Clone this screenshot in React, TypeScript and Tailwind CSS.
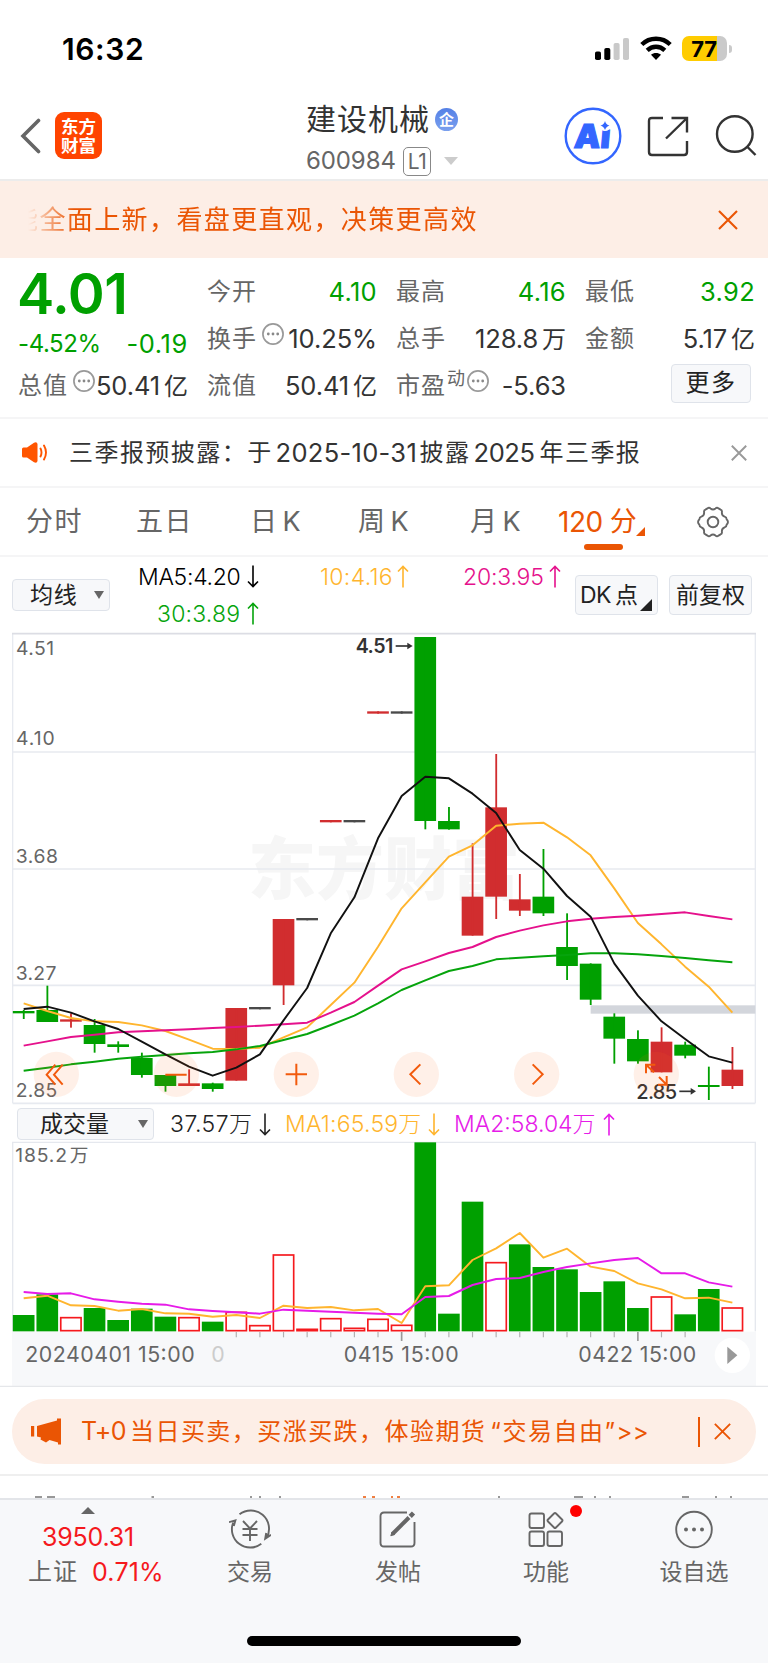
import type { ReactNode } from 'react';

const GREEN = '#00a000';
const RED = '#d12d2f';
const FLAT = '#4a4a4a';

// Horizontal position of the n-th bar, in 3x points
const barX = (i: number) => 71 + i * 70.87;

// [color, open/close top, open/close bottom, high, low]
const candles: [string, number, number, number, number][] = [
  [GREEN, 1143, 1150, 1140, 1167],
  [GREEN, 1140, 1176, 1067, 1176],
  [RED, 1168, 1175, 1150, 1193],
  [GREEN, 1185, 1242, 1167, 1268],
  [GREEN, 1243, 1251, 1234, 1268],
  [GREEN, 1284, 1335, 1268, 1343],
  [GREEN, 1335, 1368, 1335, 1385],
  [RED, 1360, 1368, 1318, 1368],
  [GREEN, 1360, 1377, 1358, 1385],
  [RED, 1134, 1352, 1134, 1352],
  [FLAT, 1131, 1138, 1131, 1138],
  [RED, 867, 1066, 867, 1125],
  [FLAT, 864, 871, 864, 871],
  [RED, 570, 577, 570, 577],
  [FLAT, 570, 577, 570, 577],
  [RED, 244, 251, 244, 251],
  [FLAT, 244, 251, 244, 251],
  [GREEN, 21, 573, 21, 598],
  [GREEN, 573, 598, 531, 599],
  [RED, 800, 917, 640, 917],
  [RED, 532, 800, 372, 867],
  [RED, 808, 842, 732, 858],
  [GREEN, 800, 850, 657, 858],
  [GREEN, 951, 1008, 850, 1050],
  [GREEN, 1001, 1109, 1000, 1125],
  [GREEN, 1160, 1226, 1150, 1301],
  [GREEN, 1227, 1294, 1201, 1301],
  [RED, 1235, 1327, 1192, 1327],
  [GREEN, 1244, 1277, 1235, 1285],
  [GREEN, 1365, 1371, 1310, 1410],
  [RED, 1319, 1368, 1251, 1377],
];

const priceLines = [
  { color: '#ffb52e', data: [1120, 1143, 1164, 1174, 1176, 1186, 1203, 1229, 1256, 1257, 1253, 1222, 1192, 1125, 1058, 950, 835, 757, 680, 646, 587, 581, 578, 622, 676, 775, 879, 943, 1010, 1070, 1148] },
  { color: '#e5118c', data: [1247, 1234, 1221, 1214, 1207, 1204, 1201, 1198, 1194, 1191, 1187, 1183, 1178, 1148, 1116, 1067, 1018, 994, 969, 951, 921, 902, 886, 874, 866, 861, 857, 852, 847, 858, 868] },
  { color: '#06a40c', data: [1322, 1313, 1303, 1295, 1286, 1280, 1275, 1270, 1266, 1258, 1248, 1230, 1212, 1185, 1157, 1120, 1080, 1051, 1023, 1008, 988, 983, 979, 975, 970, 970, 973, 978, 984, 991, 997] },
  { color: '#111111', data: [1137, 1130, 1148, 1174, 1197, 1235, 1273, 1310, 1337, 1313, 1273, 1171, 1074, 910, 802, 625, 498, 440, 445, 491, 549, 660, 716, 798, 860, 1000, 1097, 1174, 1227, 1279, 1298] },
];

// [rising, top]
const volumes: [boolean, number][] = [
  [false, 645], [false, 583], [true, 651], [false, 624], [false, 660], [false, 626], [false, 650], [true, 651],
  [false, 665], [true, 635], [true, 675], [true, 463], [true, 686], [true, 654], [true, 683], [true, 656],
  [true, 674], [false, 127], [false, 641], [false, 305], [true, 486], [false, 433], [false, 501], [false, 508],
  [false, 576], [false, 544], [false, 624], [true, 589], [false, 643], [false, 567], [true, 622],
];

const volumeLines = [
  { color: '#ffb52e', data: [595, 587, 616, 618, 632, 627, 640, 641, 650, 645, 654, 617, 624, 621, 631, 627, 669, 559, 556, 480, 445, 399, 473, 446, 500, 513, 550, 568, 595, 593, 608] },
  { color: '#e61be8', data: [576, 582, 580, 598, 605, 611, 614, 628, 633, 637, 641, 629, 632, 635, 638, 641, 643, 591, 588, 555, 537, 534, 516, 501, 490, 480, 474, 520, 520, 547, 560] },
];

const toPoints = (data: number[]) => data.map((y, i) => `${barX(i)},${y}`).join(' ');

const Cross = ({ size, className, width = 2 }: { size: number; className: string; width?: number }) => (
  <svg width={size} height={size} viewBox="0 0 20 20" className={className} fill="none" stroke="currentColor" strokeWidth={width}>
    <path d="M1 1L19 19M19 1L1 19" />
  </svg>
);

const Arrow = ({ down = false, className = '' }: { down?: boolean; className?: string }) => (
  <svg width="12" height="23" viewBox="0 0 12 23" className={className} fill="none" stroke="currentColor" strokeWidth="1.6">
    {down ? <path d="M6 .5V21.500M1 16.500L6 21.500L11 16.500" /> : <path d="M6 22.500V1.500M1 6.500L6 1.500L11 6.500" />}
  </svg>
);

const Dots = ({ className = '' }: { className?: string }) => (
  <svg width="22" height="22" viewBox="0 0 22 22" className={className}>
    <circle cx="11" cy="11" r="10.1" fill="none" stroke="#999" strokeWidth="1.7" />
    <circle cx="6.3" cy="11" r="1.4" fill="#888" />
    <circle cx="11" cy="11" r="1.4" fill="#888" />
    <circle cx="15.7" cy="11" r="1.4" fill="#888" />
  </svg>
);

const StatusBar = () => (
  <div className="flex h-24 items-start pl-[62px] pt-[31px]">
    <span className="w-[533px] text-[30px] font-semibold leading-9 tracking-[0.6px] text-black">16:32</span>
    <svg width="34" height="24" viewBox="0 0 34 24" className="mt-[5px]">
      <rect x="0" y="15.5" width="6" height="8.5" rx="1.8" fill="#000" />
      <rect x="9.3" y="12" width="6" height="12" rx="1.8" fill="#000" />
      <rect x="18.6" y="7" width="6" height="17" rx="1.8" fill="#c9c9c9" />
      <rect x="28" y="2" width="6" height="22" rx="1.8" fill="#c9c9c9" />
    </svg>
    <svg width="32" height="24" viewBox="0 0 32 24" className="ml-[11px] mt-[5px]" fill="none" stroke="#000" strokeWidth="4.300">
      <path d="M1.8 8.6C9.6 .8 22.4 .8 30.2 8.6" />
      <path d="M7.2 14.4C12.2 9.5 19.8 9.5 24.8 14.4" />
      <path d="M16 24L11 18.8C13.6 16.4 18.4 16.4 21 18.8Z" fill="#000" stroke="none" />
    </svg>
    <div className="ml-[10px] mt-[5px] flex h-[25px] w-[45px] items-center justify-center rounded-[7px] bg-[linear-gradient(90deg,#ffcc00_77%,#cacaca_77%)] pr-px text-[22px] font-bold leading-none tracking-[-0.3px] text-black">
      77
    </div>
    <div className="ml-[2px] mt-[14px] h-[8px] w-[3px] rounded-r-full bg-[#cacaca]" />
  </div>
);

const Header = () => (
  <div className="flex h-[85px] items-start border-b-2 border-[#ececec] pl-5">
    <svg width="22" height="36" viewBox="0 0 22 36" className="mt-[22px]" fill="none" stroke="#666" strokeWidth="3.6" strokeLinecap="round">
      <path d="M18.5 2.5L3 18L18.5 33.5" />
    </svg>
    <div className="ml-[13px] mt-4 flex size-[47px] flex-col items-center justify-center rounded-[9px] bg-[#ff4400] text-[17.5px] font-bold leading-[19px] text-white">
      <span>东方</span>
      <span>财富</span>
    </div>
    <div className="ml-[204px] flex w-[258px] flex-col">
      <div className="mt-[4px] flex h-[38px] items-center">
        <span className="text-[30px] leading-none tracking-[1px] text-[#333]">建设机械</span>
        <span className="ml-[5px] flex size-[23px] items-center justify-center rounded-full bg-linear-to-b from-[#5480e6] to-[#7ba0ee] text-[15px] font-bold leading-none text-white">
          企
        </span>
      </div>
      <div className="mt-[8px] flex h-[30px] items-center text-[#666]">
        <span className="w-[97px] text-[24px] leading-none tracking-[-0.1px]">600984</span>
        <span className="flex h-[29px] w-[28px] items-center justify-center rounded-[5px] border-[1.5px] border-[#888] text-[21px] leading-none tracking-[-0.5px]">
          L1
        </span>
        <svg width="14" height="8" viewBox="0 0 14 8" className="ml-[13px]">
          <path d="M0 0H14L7 8Z" fill="#ccc" />
        </svg>
      </div>
    </div>
    <svg width="58" height="58" viewBox="0 0 58 58" className="mt-[11px]">
      <circle cx="29" cy="29" r="27.3" fill="none" stroke="#3366ff" strokeWidth="2.4" />
      <text x="10" y="41" fontSize="33" fontWeight="900" fill="#3366ff" stroke="#3366ff" strokeWidth="1.2" transform="skewX(-5) translate(3 0)">
        Aı
      </text>
      <circle cx="41" cy="18.500" r="5.500" fill="#fff" />
      <path d="M41 14Q42 17.600 45.500 18.500Q42 19.500 41 23Q40 19.500 36.500 18.500Q40 17.600 41 14Z" fill="#3366ff" />
    </svg>
    <svg width="42" height="42" viewBox="0 0 42 42" className="ml-[25px] mt-5" fill="none" stroke="#333" strokeWidth="2.4">
      <path d="M16 2H5Q2 2 2 5V36Q2 39 5 39H37Q40 39 40 36V25M24.500 2H40V16.500M40 2L19 22.500" />
    </svg>
    <svg width="42" height="42" viewBox="0 0 42 42" className="ml-[26px] mt-[18px]" fill="none" stroke="#333" strokeWidth="2.4">
      <circle cx="19.800" cy="20" r="17.800" />
      <path d="M32 32.500L40.500 41" />
    </svg>
  </div>
);

const Banner = () => (
  <div className="flex h-[77px] items-center bg-[#fdeee6] pl-[12px] text-[#ea5504]">
    <div className="w-[706px] whitespace-nowrap text-[26px] leading-[40px] tracking-[1.4px] [mask-image:linear-gradient(90deg,transparent_16px,black_62px)]">
      能全面上新，看盘更直观，决策更高效
    </div>
    <Cross size={20} width={2.1} className="ml-0" />
  </div>
);

const Stat = ({ label, value, unit, green, extra }: { label: string; value: string; unit?: string; green?: boolean; extra?: ReactNode }) => (
  <div className="flex h-[47.300px] items-center justify-between whitespace-nowrap leading-none">
    <span className="flex items-center text-[24px] tracking-[1px] text-[#666]">
      {label}
      {extra}
    </span>
    <span className={green ? 'text-[25.500px] tracking-[0.300px] text-[#00a000]' : 'text-[25.500px] tracking-[-0.100px] text-[#333]'}>
      {value}
      {unit && <span className="ml-[4px] text-[24px]">{unit}</span>}
    </span>
  </div>
);

const Quote = () => (
  <div className="grid h-[161px] grid-cols-4 gap-x-[19px] border-b-2 border-[#f5f5f6] pl-[18px] pr-[13px] pt-[10px]">
    <div className="flex flex-col">
      <div className="h-[94.600px] text-[#00a000]">
        <div className="-ml-[1px] text-[56px] font-semibold leading-[52px] tracking-[-0.500px]">4.01</div>
        <div className="mt-[9px] flex justify-between text-[24px] leading-[30px] tracking-[-0.4px]">
          <span>-4.52%</span>
          <span className="text-[25.500px] tracking-[0.600px]">-0.19</span>
        </div>
      </div>
      <Stat label="总值" value="50.41" unit="亿" extra={<Dots className="-mr-2 mb-[10px] ml-[5px]" />} />
    </div>
    <div>
      <Stat label="今开" value="4.10" green />
      <Stat label="换手" value="10.25%" extra={<Dots className="mb-[10px] ml-[5px]" />} />
      <Stat label="流值" value="50.41" unit="亿" />
    </div>
    <div>
      <Stat label="最高" value="4.16" green />
      <Stat label="总手" value="128.8" unit="万" />
      <Stat
        label="市盈"
        value="-5.63"
        extra={
          <>
            <span className="mb-[14px] ml-[1px] text-[18px] tracking-normal">动</span>
            <Dots className="mb-[10px] ml-[2px]" />
          </>
        }
      />
    </div>
    <div>
      <Stat label="最低" value="3.92" green />
      <Stat label="金额" value="5.17" unit="亿" />
      <div className="ml-auto mr-[4px] mt-[1px] flex h-[39px] w-[80px] items-center justify-center rounded-[4px] border-[1.5px] border-[#dfe3ea] bg-[#f7f8fa] text-[24px] tracking-[1.500px] text-[#222]">
        更多
      </div>
    </div>
  </div>
);

const Notice = () => (
  <div className="flex h-[69px] items-center border-b-2 border-[#f5f5f6] pl-[22px] text-[#333]">
    <svg width="26" height="21" viewBox="0 0 26 21">
      <path d="M1.500 5.500H5L12 .8Q15 -.5 15.500 2V19Q15 21.500 12 20.200L5 15.500H1.500Q0 15.500 0 14V7Q0 5.500 1.500 5.500Z" fill="#ff5500" />
      <path d="M18.500 6.500Q20.500 10.500 18.500 14.500M22 3.500Q26 10.500 22 17.500" fill="none" stroke="#ff5500" strokeWidth="1.900" strokeLinecap="round" />
    </svg>
    <div className="ml-[21px] flex w-[662px] items-center whitespace-nowrap text-[24px] leading-none tracking-[1.450px]">
      <span>三季报预披露：于</span>
      <span className="ml-[3px] w-[144px] text-[25.500px] tracking-[0.300px]">2025-10-31</span>
      <span>披露</span>
      <span className="ml-[3px] w-[66px] text-[25.500px] tracking-[-0.400px]">2025</span>
      <span>年三季报</span>
    </div>
    <Cross size={16} className="text-[#999]" width={2.4} />
  </div>
);

const tab = 'whitespace-nowrap text-[27px] leading-none tracking-[1.500px]';

const Tabs = () => (
  <div className="flex h-[69px] items-center border-b-2 border-[#f5f5f6] pl-[26px] text-[#666]">
    <span className={`${tab} w-[110px]`}>分时</span>
    <span className={`${tab} w-[114px]`}>五日</span>
    <span className={`${tab} w-[108px]`}>日<span className="ml-[4px]">K</span></span>
    <span className={`${tab} w-[112px]`}>周<span className="ml-[4px]">K</span></span>
    <span className={`${tab} w-[88px]`}>月<span className="ml-[4px]">K</span></span>
    <div className="relative flex h-full w-[139px] items-center text-[#ea5504]">
      <span className="whitespace-nowrap text-[28px] leading-none tracking-[-0.500px]">120</span>
      <span className="ml-[7px] text-[27px] leading-none">分</span>
      <svg width="9" height="9" viewBox="0 0 9 9" className="-ml-px mt-[20px]">
        <path d="M9 0V9H0Z" fill="#ea5504" />
      </svg>
      <div className="absolute left-[26px] top-[56px] h-[6px] w-[39px] rounded-full bg-[#ea5504]" />
    </div>
    <svg width="32" height="32" viewBox="0 0 32 32" fill="none" stroke="#666" strokeWidth="1.900" strokeLinejoin="round">
      <path d="M10.500 2.400Q12 1 13.500 2.400Q16 4.400 18.500 2.400Q20 1 21.500 2.400L23.600 3.600Q25.300 4.200 24.900 6.400Q24.600 9.400 27.600 10.600Q29.600 11.200 29.600 13.200L30.600 14.600Q31.200 16 30.600 17.400L29.600 18.800Q29.600 20.800 27.600 21.400Q24.600 22.600 24.900 25.600Q25.300 27.800 23.600 28.400L21.500 29.600Q20 31 18.500 29.600Q16 27.600 13.500 29.600Q12 31 10.500 29.600L8.400 28.400Q6.700 27.800 7.100 25.600Q7.400 22.600 4.400 21.400Q2.400 20.800 2.400 18.800L1.400 17.400Q.8 16 1.400 14.600L2.400 13.200Q2.400 11.200 4.400 10.600Q7.400 9.400 7.100 6.400Q6.700 4.200 8.400 3.600Z" />
      <circle cx="16" cy="16" r="5.300" />
    </svg>
  </div>
);

const box = 'flex items-center whitespace-nowrap rounded-[4px] border-[1.500px] border-[#dfe3ea] bg-[#f7f8fa] text-[#222]';

const Caret = ({ className }: { className: string }) => (
  <svg width="10" height="8" viewBox="0 0 10 8" className={className}>
    <path d="M0 0H10L5 8Z" fill="#666" />
  </svg>
);

const Averages = () => (
  <div className="flex h-[73px] items-start pl-3">
    <div className={`${box} mt-[22px] h-[32px] w-[98px] pl-[17px] text-[23px] leading-none tracking-[0.700px]`}>
      均线
      <Caret className="ml-[17px]" />
    </div>
    <div className="ml-[28px] grid w-[437px] grid-cols-[182px_143px_112px] pt-[7px] text-[23px] font-light leading-[26px]">
      <div className="flex h-[37px] items-start text-black">
        <span className="w-[109px] tracking-[-0.300px]">MA5:4.20</span>
        <Arrow down className="mt-[1px]" />
      </div>
      <div className="flex h-[37px] items-start text-[#ffb52e]">
        <span className="w-[77px] tracking-[0.300px]">10:4.16</span>
        <Arrow className="mt-[1px]" />
      </div>
      <div className="flex h-[37px] items-start text-[#e5118c]">
        <span className="w-[86px] tracking-[-0.200px]">20:3.95</span>
        <Arrow className="mt-[1px]" />
      </div>
      <div className="flex items-start pl-[19px] text-[#06a40c]">
        <span className="w-[90px] tracking-[0.200px]">30:3.89</span>
        <Arrow className="mt-[1px]" />
      </div>
    </div>
    <div className={`${box} mt-[18px] h-[40px] w-[83px] pl-[4px] text-[23px] leading-none`}>
      <span className="w-[35px] tracking-[-0.500px]">DK</span>
      <span>点</span>
      <svg width="12" height="12" viewBox="0 0 12 12" className="ml-[2px] mt-[20px]">
        <path d="M12 0V12H0Z" fill="#222" />
      </svg>
    </div>
    <div className={`${box} ml-[11px] mt-[18px] h-[40px] w-[83px] justify-center text-[23px] leading-none`}>前复权</div>
  </div>
);

const axisText = { fontSize: 58, fill: '#666' };

const PriceChart = () => (
  <svg width="768" height="476" viewBox="0 0 2304 1428" className="block">
    <text x="744" y="792" fontSize="204" fontWeight="900" fill="#f6f6f6" textLength="816">
      东方财富
    </text>
    <g stroke="#e7eaf0" strokeWidth="5" fill="none">
      <path d="M38 366H2266M38 717H2266M38 1066H2266M38 1420H2266" />
      <path d="M38 11V1420M2266 11V1420" strokeWidth="4" />
      <path d="M36 11H2268" stroke="#dcdde4" />
    </g>
    <rect x="1772" y="1126" width="494" height="25" fill="#d3d6dc" />
    <text x="48" y="76" {...axisText} textLength="114">4.51</text>
    <text x="48" y="346" {...axisText} textLength="116">4.10</text>
    <text x="47" y="698" {...axisText} textLength="127">3.68</text>
    <text x="47" y="1049" {...axisText} textLength="122">3.27</text>
    <text x="47" y="1401" {...axisText} textLength="125">2.85</text>
    {candles.map(([color, top, bottom, high, low], i) => (
      <g key={i} fill={color}>
        <rect x={barX(i) - 32.5} y={top} width="65" height={bottom - top} />
        <rect x={barX(i) - 2.5} y={high} width="5.500" height={low - high} />
      </g>
    ))}
    {priceLines.map((line) => (
      <polyline key={line.color} points={toPoints(line.data)} fill="none" stroke={line.color} strokeWidth="5.800" strokeLinejoin="round" />
    ))}
    <g fill="#333" stroke="#333">
      <text x="1067" y="70" fontSize="59" fontWeight="600" stroke="none" textLength="113">4.51</text>
      <path d="M1187 48H1225" strokeWidth="5" />
      <path d="M1222 38L1238 48L1222 58Z" stroke="none" />
      <text x="1909" y="1407" fontSize="60" fontWeight="500" stroke="none" textLength="122">2.85</text>
      <path d="M2038 1384H2075" strokeWidth="5" />
      <path d="M2072 1374L2088 1384L2072 1394Z" stroke="none" />
    </g>
    <g fill="#ff6a20" fillOpacity="0.1">
      {[169, 529, 889, 1249, 1610, 1969].map((cx) => (
        <circle key={cx} cx={cx} cy="1333" r="68" />
      ))}
    </g>
    <g fill="none" stroke="#f25a0c" strokeWidth="6">
      <path d="M166 1304L140 1334L166 1364M188 1304L162 1334L188 1364" />
      <path d="M496 1334H560M857 1333H921M889 1301V1366" />
      <path d="M1261 1303L1231 1333L1261 1363M1598 1303L1628 1333L1598 1363" />
      <path d="M1938 1330V1304H1966M1939 1305L1962 1327M2000 1338V1364H1974M1999 1363L1977 1341" />
    </g>
  </svg>
);

const VolumeLegend = () => (
  <div className="flex h-[34px] items-center pl-[17px] text-[23px] leading-none">
    <div className={`${box} mt-[2px] h-[32px] w-[137px] pl-[22px]`}>
      <span className="w-[98px]">成交量</span>
      <Caret className="" />
    </div>
    <div className="ml-[16px] mt-[2px] flex items-center whitespace-nowrap font-light">
      <span className="w-[89px] tracking-[0.500px] text-[#222]">37.57万</span>
      <Arrow down className="text-[#222]" />
      <span className="ml-[14px] w-[143px] tracking-[0.200px] text-[#ffb52e]">MA1:65.59万</span>
      <Arrow down className="text-[#ffb52e]" />
      <span className="ml-[14px] w-[149px] tracking-[0px] text-[#e61be8]">MA2:58.04万</span>
      <Arrow className="text-[#e61be8]" />
    </div>
  </div>
);

const VolumeChart = () => (
  <svg width="768" height="247" viewBox="0 120 2304 741" className="block">
    <rect x="36" y="695" width="2232" height="163" fill="#f7f8fa" />
    <path d="M0 859H2304" stroke="#e5e7ea" strokeWidth="4" />
    <path d="M38 694V127H2266V694" fill="none" stroke="#e5e8ee" strokeWidth="4" />
    <text x="46" y="186" {...axisText} textLength="155">185.2</text>
    <text x="209" y="186" fontSize="56" fill="#666">万</text>
    {volumes.map(([rising, top], i) =>
      rising ? (
        <rect key={i} x={barX(i) - 30.500} y={top + 2} width="61" height={Math.max(690 - top, 3)} fill="#fff" stroke="#f5191d" strokeWidth="5" />
      ) : (
        <rect key={i} x={barX(i) - 32.500} y={top} width="65" height={694 - top} fill={GREEN} />
      ),
    )}
    {volumeLines.map((line) => (
      <polyline key={line.color} points={toPoints(line.data)} fill="none" stroke={line.color} strokeWidth="5.800" strokeLinejoin="round" />
    ))}
    {volumes.map((_, i) => {
      if (i < 9 || i > 28) return null;
      const major = i === 16 || i === 26;
      return <path key={i} d={`M${barX(i)} 696V${major ? 723 : 712}`} stroke={major ? '#999' : '#b0b0b0'} strokeWidth={major ? 5 : 3.500} />;
    })}
    <text x="76" y="787" fontSize="64" fill="#666" textLength="508">20240401 15:00</text>
    <text x="634" y="787" fontSize="64" fill="#ccc">0</text>
    <text x="1031" y="787" fontSize="64" fill="#666" textLength="345">0415 15:00</text>
    <text x="1735" y="787" fontSize="64" fill="#666" textLength="354">0422 15:00</text>
    <circle cx="2197" cy="766" r="53" fill="#fff" />
    <path d="M2182 740L2212 766L2182 792Z" fill="#999" />
  </svg>
);

const Promo = () => (
  <div className="flex h-[89px] items-start border-b-2 border-[#efefef] px-3 pt-3">
    <div className="flex h-[65px] w-full items-center rounded-full bg-[#fdeee6] pl-[19px] text-[#ea5504]">
      <svg width="31" height="27" viewBox="0 0 31 27" fill="#ea5504">
        <path d="M0 8H3.200V18.500H0ZM6 8L26 2.500V.5H30V26.500H27V24.500L18.500 22L15 24.500L9.500 21.500L10 19.500L6 18.500Z" />
      </svg>
      <div className="ml-[19px] flex w-[617px] items-center whitespace-nowrap text-[24px] leading-none tracking-[1.450px]">
        <span className="w-[49px] text-[25px] tracking-[-0.500px]">T+0</span>
        <span>当日买卖，买涨买跌，体验期货</span>
        <span className="ml-[4px] tracking-[1.500px]">“交易自由”</span>
        <span className="tracking-[0.500px]">&gt;&gt;</span>
      </div>
      <div className="h-[30px] w-[2px] bg-[#ea5504]" />
      <Cross size={17} className="ml-[14px]" width={2.200} />
    </div>
  </div>
);

// Upper edge of the next tab strip, peeking out above the bottom bar
const NextStrip = () => (
  <svg width="768" height="22" viewBox="0 0 768 22" className="block" fill="none" strokeWidth="1.500">
    <path d="M35 21H42M47 21H55M151.500 21H154M250 21H252M259 21H261M279 21H281M498 21H500M574 21H583M594 21H596M609 21H611M682 21H689M715 21H717M730 21H732" stroke="#777" />
    <path d="M363 21H366M372 21H375M391 21H393M397 21H400" stroke="#ea5504" />
  </svg>
);

const NavItem = ({ label, className, children }: { label: string; className: string; children: ReactNode }) => (
  <div className={`flex flex-col items-center pt-[9px] ${className}`}>
    <svg width="42" height="42" viewBox="0 0 42 42" fill="none" stroke="#666" strokeWidth="1.900">
      {children}
    </svg>
    <span className="mt-[8px] text-[23px] leading-[26px] text-[#666]">{label}</span>
  </div>
);

const BottomBar = () => (
  <div className="flex h-[165px] flex-col border-t-2 border-[#e3e5e9] bg-[#f7f8fa]">
    <div className="flex h-[136px]">
      <div className="flex w-[176px] flex-col items-center pt-[7px]">
        <svg width="14" height="7" viewBox="0 0 14 7">
          <path d="M7 0L14 7H0Z" fill="#666" />
        </svg>
        <span className="mt-[10px] text-[25px] leading-[26px] tracking-[-0.200px] text-[#f5191d]">3950.31</span>
        <div className="mt-[9px] flex w-[176px] items-center whitespace-nowrap pl-[28px] leading-[26px]">
          <span className="w-[64px] text-[24px] tracking-[1px] text-[#666]">上证</span>
          <span className="text-[25px] tracking-[0.200px] text-[#f5191d]">0.71%</span>
        </div>
      </div>
      <NavItem label="交易" className="w-[148px]">
        <path d="M10.500 5.300A18.300 18.300 0 0 1 37.800 28.500M32.300 34.800A18.300 18.300 0 0 1 4.200 13.500M0 13.200L6.400 11.300L4.800 17M42 25.800L36.200 29.800L37.200 24" />
        <path d="M14 12L21 19.500L28 12M21 19.500V32M13.500 20H28.500M13.500 26H28.500" />
      </NavItem>
      <NavItem label="发帖" className="w-[148px]">
        <path d="M30 3.500H7Q3.500 3.500 3.500 7V34Q3.500 37.500 7 37.500H34Q37.500 37.500 37.500 34V13" />
        <path d="M15.500 25L32 8.500" strokeWidth="4" />
        <path d="M13.800 26.800L17.500 25.500L15 23Z" fill="#666" strokeWidth="1" />
        <path d="M33.200 7.300L36.500 4" strokeWidth="4.500" />
      </NavItem>
      <div className="relative">
        <NavItem label="功能" className="w-[148px]">
          <rect x="4.500" y="4.500" width="14.500" height="14.500" rx="2" />
          <rect x="4.500" y="22.500" width="14.500" height="14.500" rx="2" />
          <rect x="22.500" y="22.500" width="14.500" height="14.500" rx="2" />
          <path d="M29 4.500Q30 3.500 31 4.500L37 10.500Q38 11.500 37 12.500L31 18.500Q30 19.500 29 18.500L23 12.500Q22 11.500 23 10.500Z" />
        </NavItem>
        <div className="absolute left-[98px] top-[5px] size-3 rounded-full bg-[#ff0000]" />
      </div>
      <NavItem label="设自选" className="w-[148px]">
        <circle cx="21" cy="20.500" r="17.800" />
        <g fill="#666" stroke="none">
          <circle cx="13" cy="20.500" r="2" />
          <circle cx="21" cy="20.500" r="2" />
          <circle cx="29" cy="20.500" r="2" />
        </g>
      </NavItem>
    </div>
    <div className="mx-auto h-[10px] w-[274px] rounded-full bg-black" />
  </div>
);

const App = () => {
  return (
    <div className="h-[1663px] w-[768px] overflow-hidden bg-white font-['Inter','Noto_Sans_CJK_SC',sans-serif]">
      <StatusBar />
      <Header />
      <Banner />
      <Quote />
      <Notice />
      <Tabs />
      <Averages />
      <PriceChart />
      <VolumeLegend />
      <VolumeChart />
      <Promo />
      <NextStrip />
      <BottomBar />
    </div>
  );
};

export default App;
